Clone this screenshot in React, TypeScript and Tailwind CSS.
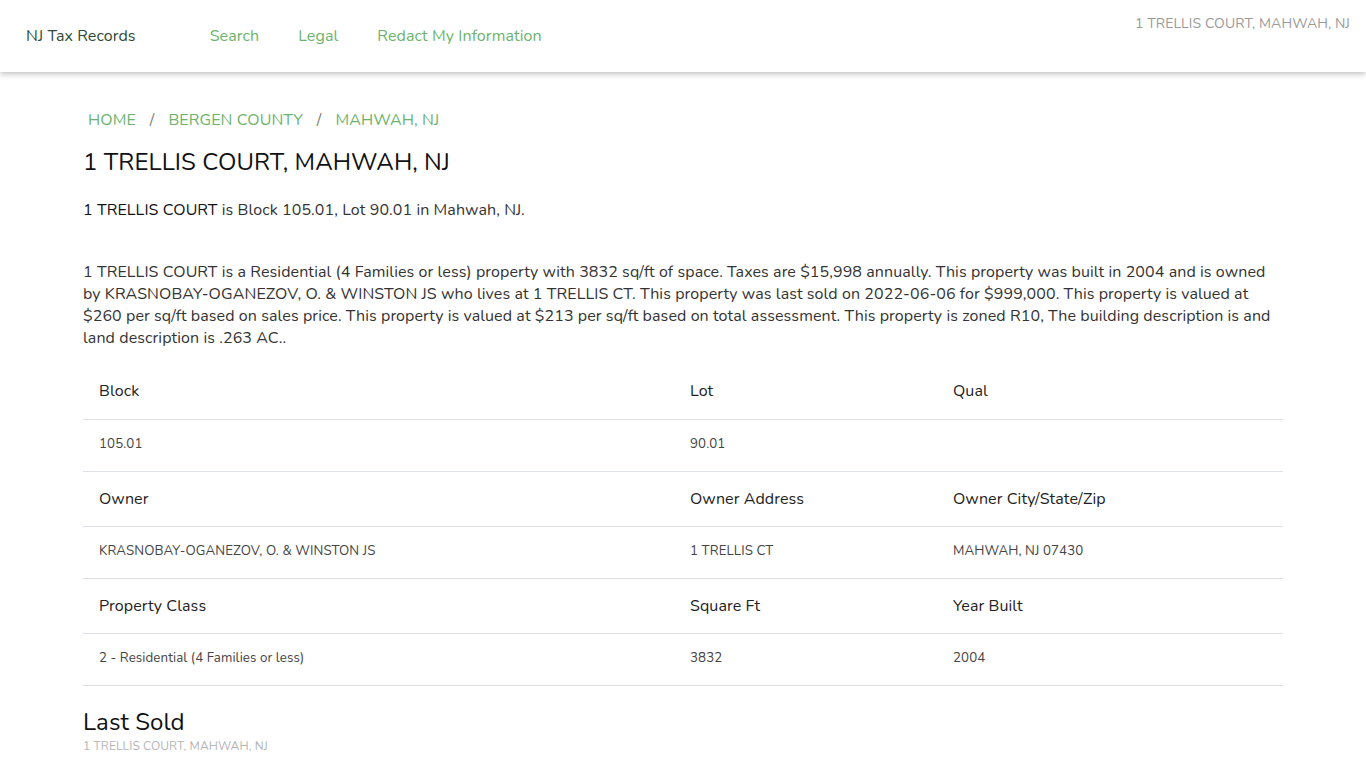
import React from "react";

const font = { fontFamily: '"Nunito", Lato, "Noto Sans", sans-serif' };

type Cell = { label: string; value: string };

const rows: Cell[][] = [
  [
    { label: "Block", value: "105.01" },
    { label: "Lot", value: "90.01" },
    { label: "Qual", value: "" },
  ],
  [
    { label: "Owner", value: "KRASNOBAY-OGANEZOV, O. & WINSTON JS" },
    { label: "Owner Address", value: "1 TRELLIS CT" },
    { label: "Owner City/State/Zip", value: "MAHWAH, NJ 07430" },
  ],
  [
    { label: "Property Class", value: "2 - Residential (4 Families or less)" },
    { label: "Square Ft", value: "3832" },
    { label: "Year Built", value: "2004" },
  ],
];

export default function App() {
  return (
    <div className="min-h-screen bg-white tracking-[0.09px] text-[#222]" style={font}>
      <nav className="relative z-10 flex h-[72px] items-start bg-white shadow-[0_2px_6px_rgba(0,0,0,0.25)]">
        <div className="flex h-full items-center pl-[26px]">
          <a className="text-[16px] text-[#2f4a36]">NJ Tax Records</a>
          <ul className="ml-[74px] flex gap-[39px] text-[16px] text-[#6cb36c]">
            <li>Search</li>
            <li>Legal</li>
            <li>Redact My Information</li>
          </ul>
        </div>
        <div className="ml-auto pr-[16px] pt-[13px] text-[14px] text-[#9a9a9a]">
          1 TRELLIS COURT, MAHWAH, NJ
        </div>
      </nav>

      <main className="mx-auto w-[1200px] pt-[37px]">
        <ol className="flex items-center px-[5px] text-[16px] leading-[22px] text-[#6cb36c]">
          <li>HOME</li>
          <li className="px-[14px] text-[#777]">/</li>
          <li>BERGEN COUNTY</li>
          <li className="px-[14px] text-[#777]">/</li>
          <li>MAHWAH, NJ</li>
        </ol>

        <h1 className="mt-[16px] text-[24px] leading-[30px] text-[#111]">
          1 TRELLIS COURT, MAHWAH, NJ
        </h1>

        <p className="mt-[22px] text-[16px] leading-[22px] text-[#333]">
          <span className="text-[#111]">1 TRELLIS COURT</span> is Block 105.01, Lot 90.01 in Mahwah, NJ.
        </p>

        <p className="mt-[40px] text-[16px] leading-[22px] text-[#333]">
          1 TRELLIS COURT is a Residential (4 Families or less) property with 3832 sq/ft of space. Taxes are $15,998
          annually. This property was built in 2004 and is owned by KRASNOBAY-OGANEZOV, O. &amp; WINSTON JS who lives
          at 1 TRELLIS CT. This property was last sold on 2022-06-06 for $999,000. This property is valued at $260 per
          sq/ft based on sales price. This property is valued at $213 per sq/ft based on total assessment. This
          property is zoned R10, The building description is and land description is .263 AC..
        </p>

        <table className="mt-[15px] w-full border-collapse text-left">
          <colgroup>
            <col className="w-[591px]" />
            <col className="w-[263px]" />
            <col />
          </colgroup>
          <tbody>
            {rows.map((row, i) => (
              <React.Fragment key={i}>
                <tr className="border-b border-[#dee2e6]">
                  {row.map((c) => (
                    <th key={c.label} className="h-[55px] px-[16px] align-middle text-[16px] font-normal text-[#222]">
                      {c.label}
                    </th>
                  ))}
                </tr>
                <tr className="border-b border-[#dee2e6]">
                  {row.map((c) => (
                    <td key={c.label} className="h-[52px] px-[16px] align-middle text-[13.3px] text-[#444]">
                      {c.value}
                    </td>
                  ))}
                </tr>
              </React.Fragment>
            ))}
          </tbody>
        </table>

        <h2 className="mt-[21px] text-[24px] leading-[30px] text-[#111]">Last Sold</h2>
        <div className="mt-[1px] text-[12px] leading-[16px] text-[#b5b5b5]">1 TRELLIS COURT, MAHWAH, NJ</div>
      </main>
    </div>
  );
}
